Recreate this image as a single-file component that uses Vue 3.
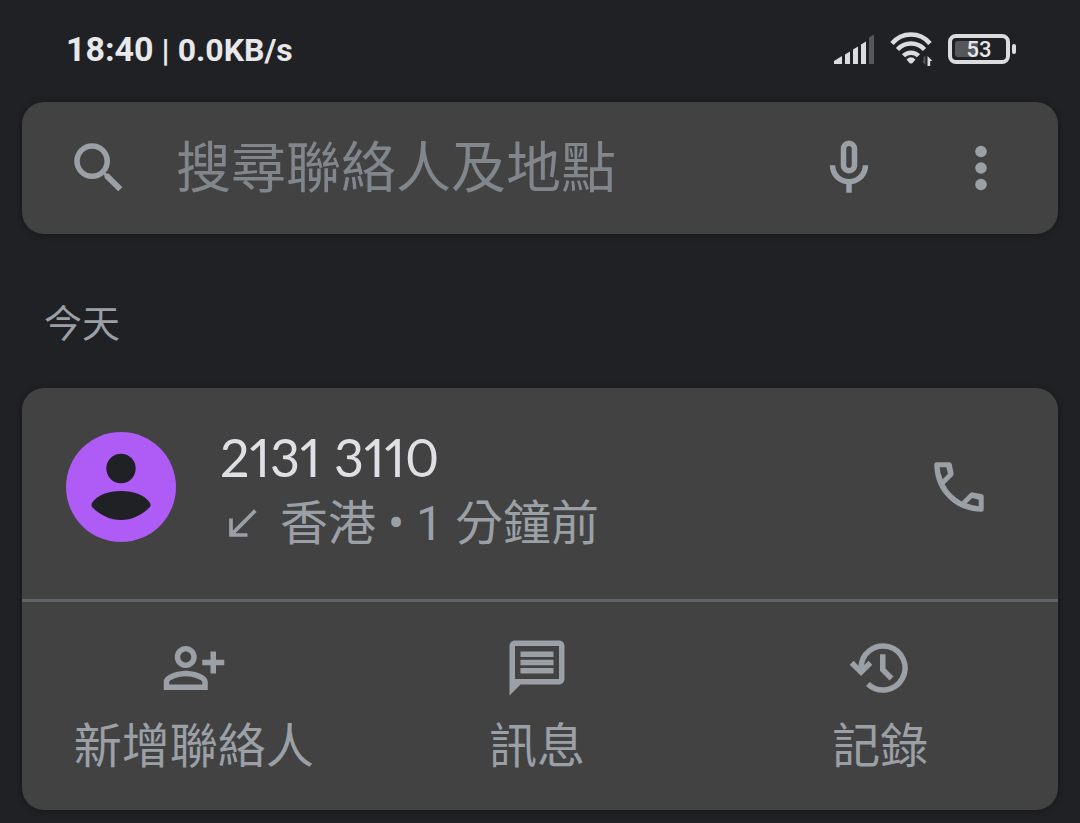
<template>
  <div class="phone">
    <header class="status-bar">
      <div class="status-left">
        <span class="clock">18:40</span>
        <span class="speed">| 0.0KB/s</span>
      </div>
      <div class="status-right">
        <svg class="signal" viewBox="0 0 40 30" aria-hidden="true">
          <path d="M0 30v-3l8-5v8zM11 30V20.500l5-3V30zM19 30V15.500l5-3V30zM27 30V10.500l5-3V30z" />
          <path class="dim" d="M35 30V3.500l5-3V30z" />
        </svg>
        <svg class="wifi" viewBox="0 0 46 36" aria-hidden="true">
          <g class="arcs">
            <path d="M4 12.500a24.500 24.500 0 0 1 38 0" />
            <path d="M9.500 18.500a18.400 18.400 0 0 1 27 0" />
            <path d="M15.500 24.800a10.500 10.500 0 0 1 15 0" />
          </g>
          <path d="M18.500 28.500q4.500-4.500 9 0l-3 3.500q-1.500 1-3 0z" />
          <path class="dim" d="M37.500 25v9l-3.500-4h1.500v-4z" />
          <path d="M39.500 35V25l5 5h-2.300v5z" />
        </svg>
        <div class="battery">
          <div class="battery-shell">
            <div class="battery-level" :style="{ width: battery * 0.8 + '%' }"></div>
            <span class="battery-text">{{ battery }}</span>
          </div>
          <div class="battery-cap"></div>
        </div>
      </div>
    </header>

    <form class="card search-bar" role="search" @submit.prevent>
      <label class="search-label" for="search" aria-label="搜尋">
        <svg class="icon" viewBox="0 0 24 24">
          <path d="M15.500 14h-.79l-.28-.27A6.471 6.471 0 0 0 16 9.500 6.500 6.500 0 1 0 9.500 16c1.610 0 3.090-.59 4.230-1.570l.27.28v.79l5 4.990L20.490 19l-4.990-5zm-6 0C7.010 14 5 11.990 5 9.500S7.010 5 9.500 5 14 7.010 14 9.500 11.990 14 9.500 14z" />
        </svg>
      </label>
      <input id="search" v-model="query" class="search-input" type="text" placeholder="搜尋聯絡人及地點" />
      <button type="button" class="icon-button" aria-label="語音搜尋">
        <svg class="icon" viewBox="0 0 24 24">
          <path d="M12 14c1.660 0 3-1.340 3-3V5c0-1.660-1.340-3-3-3S9 3.340 9 5v6c0 1.660 1.340 3 3 3zm-1-9c0-.55.45-1 1-1s1 .45 1 1v6c0 .55-.45 1-1 1s-1-.45-1-1V5zm6 6c0 2.760-2.240 5-5 5s-5-2.240-5-5H5c0 3.530 2.610 6.430 6 6.920V21h2v-3.080c3.390-.49 6-3.390 6-6.920h-2z" />
        </svg>
      </button>
      <button type="button" class="icon-button" aria-label="更多選項">
        <svg class="icon" viewBox="0 0 24 24">
          <circle cx="12" cy="6" r="2.100" />
          <circle cx="12" cy="12" r="2.100" />
          <circle cx="12" cy="18" r="2.100" />
        </svg>
      </button>
    </form>

    <main>
      <h2 class="day">今天</h2>
      <section class="card call-card">
        <div class="call-row">
          <svg class="avatar" viewBox="0 0 110 110" aria-hidden="true">
            <circle class="avatar-bg" cx="55" cy="55" r="55" />
            <circle cx="55" cy="36.500" r="14.700" />
            <path d="M26 71C31 63 42 59 55 59s24 4 29 12q1 2 0 4C76 83 66 88 55 88S34 83 26 75q-1-2 0-4z" />
          </svg>
          <div class="call-info">
            <div class="number">{{ call.number }}</div>
            <div class="detail">
              <svg class="direction" viewBox="0 0 24 24" aria-hidden="true">
                <path d="M20 5.410L18.590 4 7 15.590V9H5v10h10v-2H8.410z" />
              </svg>
              <span>{{ call.place }} • {{ call.time }}</span>
            </div>
          </div>
          <button type="button" class="icon-button" aria-label="撥號">
            <svg class="icon" viewBox="0 0 66 66">
              <path fill-rule="evenodd" d="M10.500 8.300H23.500Q25.300 8.300 25.700 10L27.600 19Q27.900 20.800 26.800 22L18.600 30.300Q24.500 41.500 35.700 47.400L44 39.200Q45.200 38.100 47 38.400L56 40.300Q57.700 40.700 57.700 42.500V55.500Q57.700 57.700 55.500 57.700C29 57.700 8.300 37 8.300 10.500Q8.300 8.300 10.500 8.300zM13.700 13.300Q14 19.500 16.700 25.300L22 19.700 20.300 13.300zM52.700 52.300V45.700L46.300 44 40.700 49.300Q46.500 52 52.700 52.300z" />
            </svg>
          </button>
        </div>

        <div class="actions">
          <button type="button" class="action">
            <svg class="icon" viewBox="0 0 24 24" aria-hidden="true">
              <path d="M9 12c2.210 0 4-1.790 4-4s-1.790-4-4-4-4 1.790-4 4 1.790 4 4 4zm0-6c1.100 0 2 .9 2 2s-.9 2-2 2-2-.9-2-2 .9-2 2-2zM9 13c-2.670 0-8 1.340-8 4v3h16v-3c0-2.660-5.330-4-8-4zm6 5H3v-.99C3.200 16.290 6.300 15 9 15s5.800 1.290 6 2v1zM18 6h2v3h3v2h-3v3h-2v-3h-3V9h3z" />
            </svg>
            <span>新增聯絡人</span>
          </button>
          <button type="button" class="action">
            <svg class="icon" viewBox="0 0 24 24" aria-hidden="true">
              <path d="M20 2H4c-1.100 0-2 .9-2 2v18l4-4h14c1.100 0 2-.9 2-2V4c0-1.100-.9-2-2-2zm0 14H4V4h16v12zM6 6h12v2H6zM6 9h12v2H6zM6 12h12v2H6z" />
            </svg>
            <span>訊息</span>
          </button>
          <button type="button" class="action">
            <svg class="icon history" viewBox="0 0 24 24" aria-hidden="true">
              <path d="M5.100 13.500V12a8 8 0 1 1 2.500 5.800M1.700 10.100l3.400 3.400 3.400-3.400M13 7v5.600l3.200 3.200" />
            </svg>
            <span>記錄</span>
          </button>
        </div>
      </section>
    </main>
  </div>
</template>

<script setup>
import { ref } from 'vue';

const query = ref('');
const battery = ref(53);

const call = {
  number: '2131 3110',
  place: '香港',
  time: '1 分鐘前'
};
</script>

<style>
body {
  background-color: #202125;
}
</style>

<style scoped>
.phone {
  padding: 0 22px 13px;
  font-family: Roboto, "Noto Sans CJK TC", sans-serif;
  color: #9aa0a6;
}

.status-bar {
  display: flex;
  justify-content: space-between;
  align-items: center;
  box-sizing: border-box;
  height: 102px;
  padding: 0 42px 4px 44px;
  color: #e8e8ea;
}

.status-left {
  display: flex;
  align-items: baseline;
  gap: 8px;
  font-weight: 700;
}

.clock {
  font-size: 34px;
}

.speed {
  font-size: 32px;
}

.status-right {
  display: flex;
  align-items: center;
  gap: 14px;
  fill: #dcdcde;
}

.signal {
  width: 40px;
  height: 30px;
}

.wifi {
  width: 46px;
  height: 36px;
}

.arcs {
  fill: none;
  stroke: #dcdcde;
  stroke-width: 4.5;
}

.dim {
  fill: #56575b;
}

.battery {
  display: flex;
  align-items: center;
  gap: 2px;
}

.battery-shell {
  position: relative;
  box-sizing: border-box;
  width: 62px;
  height: 30px;
  border: 4px solid #dcdcde;
  border-radius: 8px;
  text-align: center;
}

.battery-level {
  position: absolute;
  top: 3px;
  bottom: 3px;
  left: 3px;
  border-radius: 3px;
  background-color: #56575b;
}

.battery-text {
  position: relative;
  display: block;
  font-size: 22px;
  font-weight: 500;
  line-height: 24px;
}

.battery-cap {
  width: 4px;
  height: 10px;
  border-radius: 2px;
  background-color: #dcdcde;
}

.card {
  border-radius: 22px;
  background-color: #424242;
  box-shadow: 0 1px 6px rgba(0, 0, 0, 0.3);
}

.icon {
  display: block;
  width: 66px;
  height: 66px;
  fill: #9aa0a6;
}

.icon-button {
  flex: none;
  padding: 0;
  border: none;
  background: none;
  cursor: pointer;
}

.search-bar {
  display: flex;
  align-items: center;
  gap: 66px;
  height: 132px;
  padding: 0 44px;
}

.search-label {
  flex: none;
  margin-right: -22px;
}

.search-input {
  flex: 1;
  min-width: 0;
  padding: 0;
  border: none;
  outline: none;
  background: none;
  font-family: inherit;
  font-size: 55px;
  line-height: 80px;
  color: #e8eaed;
}

.search-input::placeholder {
  color: #80868b;
  opacity: 1;
}

.day {
  margin: 0;
  padding: 62px 22px 36px;
  font-size: 38px;
  font-weight: 400;
  line-height: 56px;
}

.call-row {
  display: flex;
  align-items: center;
  gap: 44px;
  padding: 32px 66px 45px 44px;
  border-bottom: 3px solid #5f6368;
}

.avatar {
  flex: none;
  width: 110px;
  height: 110px;
  fill: #202125;
}

.avatar-bg {
  fill: #af5cf7;
}

.call-info {
  flex: 1;
  min-width: 0;
}

.number {
  font-family: Lato, sans-serif;
  font-size: 52px;
  font-variant-numeric: proportional-nums;
  line-height: 74px;
  color: #dfe0e4;
}

.detail {
  display: flex;
  align-items: center;
  gap: 16px;
  font-size: 48px;
  line-height: 60px;
}

.direction {
  width: 44px;
  height: 44px;
  fill: #9aa0a6;
}

.actions {
  display: grid;
  grid-template-columns: repeat(3, 1fr);
  padding: 33px 6px 31px 0;
}

.action {
  display: flex;
  flex-direction: column;
  align-items: center;
  gap: 14px;
  padding: 0;
  border: none;
  background: none;
  font-family: inherit;
  font-size: 48px;
  line-height: 64px;
  color: #9aa0a6;
  cursor: pointer;
}

.history {
  fill: none;
  stroke: #9aa0a6;
  stroke-width: 2;
}
</style>
